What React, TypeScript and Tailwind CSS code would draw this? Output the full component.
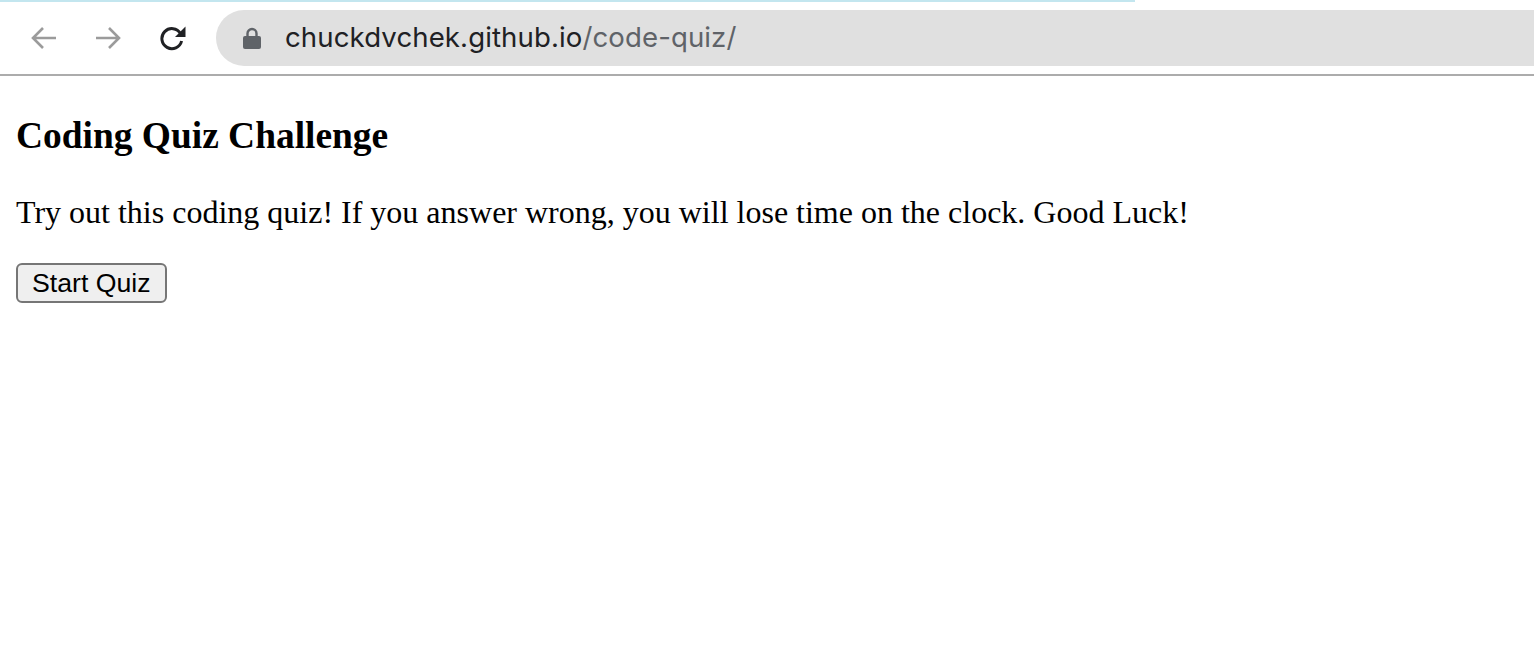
const BackIcon = ({ color }: { color: string }) => (
  <svg width="28" height="24" viewBox="0 0 28 24" fill="none">
    <path d="M26 12H3M13 2L3 12l10 10" stroke={color} strokeWidth="2.6" strokeLinecap="butt" />
  </svg>
);

const ForwardIcon = ({ color }: { color: string }) => (
  <svg width="28" height="24" viewBox="0 0 28 24" fill="none">
    <path d="M2 12h23M15 2l10 10-10 10" stroke={color} strokeWidth="2.6" strokeLinecap="butt" />
  </svg>
);

const ReloadIcon = () => (
  <svg width="28" height="26" viewBox="0 0 28 26" fill="none">
    <path d="M22.5 8.5A10 10 0 1 0 23.6 16" stroke="#202124" strokeWidth="3" />
    <path d="M27.5 1.5V12H17z" fill="#202124" />
  </svg>
);

const LockIcon = () => (
  <svg width="18" height="22" viewBox="0 0 18 22" fill="none">
    <path d="M4.5 10V6.5a4.5 4.5 0 0 1 9 0V10" stroke="#5f6368" strokeWidth="2.4" />
    <rect x="0" y="9" width="18" height="13" rx="2" fill="#5f6368" />
  </svg>
);

export default function App() {
  return (
    <div className="min-h-[652px] bg-white">
      <div className="h-[2px] w-[1135px] bg-[#c3e6ef]" />
      <div className="flex items-center pt-[8px] pb-[8px] border-b-2 border-[#acacac]">
        <div className="flex items-center w-[216px] pl-[30px] gap-[36px]">
          <BackIcon color="#9b9b9b" />
          <ForwardIcon color="#9b9b9b" />
          <ReloadIcon />
        </div>
        <div className="flex items-center flex-1 h-[56px] bg-[#e0e0e0] rounded-l-full pl-[27px]">
          <LockIcon />
          <div className="ml-[24px] text-[27.6px] tracking-[0.1px] font-['Inter','Liberation_Sans',sans-serif] leading-none">
            <span className="text-[#202124]">chuckdvchek.github.io</span>
            <span className="text-[#5f6368]">/code-quiz/</span>
          </div>
        </div>
      </div>
      <div className="px-[16px] font-['Liberation_Serif','Times_New_Roman',serif] text-black">
        <h3 className="mt-[38px] mb-[37px] text-[37.44px] font-bold leading-[43px]">Coding Quiz Challenge</h3>
        <p className="text-[32px] leading-[37px] mb-[32px]">
          Try out this coding quiz! If you answer wrong, you will lose time on the clock. Good Luck!
        </p>
        <button
          type="button"
          className="h-[40px] px-[14px] border-2 border-[#767676] rounded-[6px] bg-[#efefef] text-[26.67px] leading-none font-['Liberation_Sans',Arial,sans-serif] text-black"
        >
          Start Quiz
        </button>
      </div>
    </div>
  );
}
